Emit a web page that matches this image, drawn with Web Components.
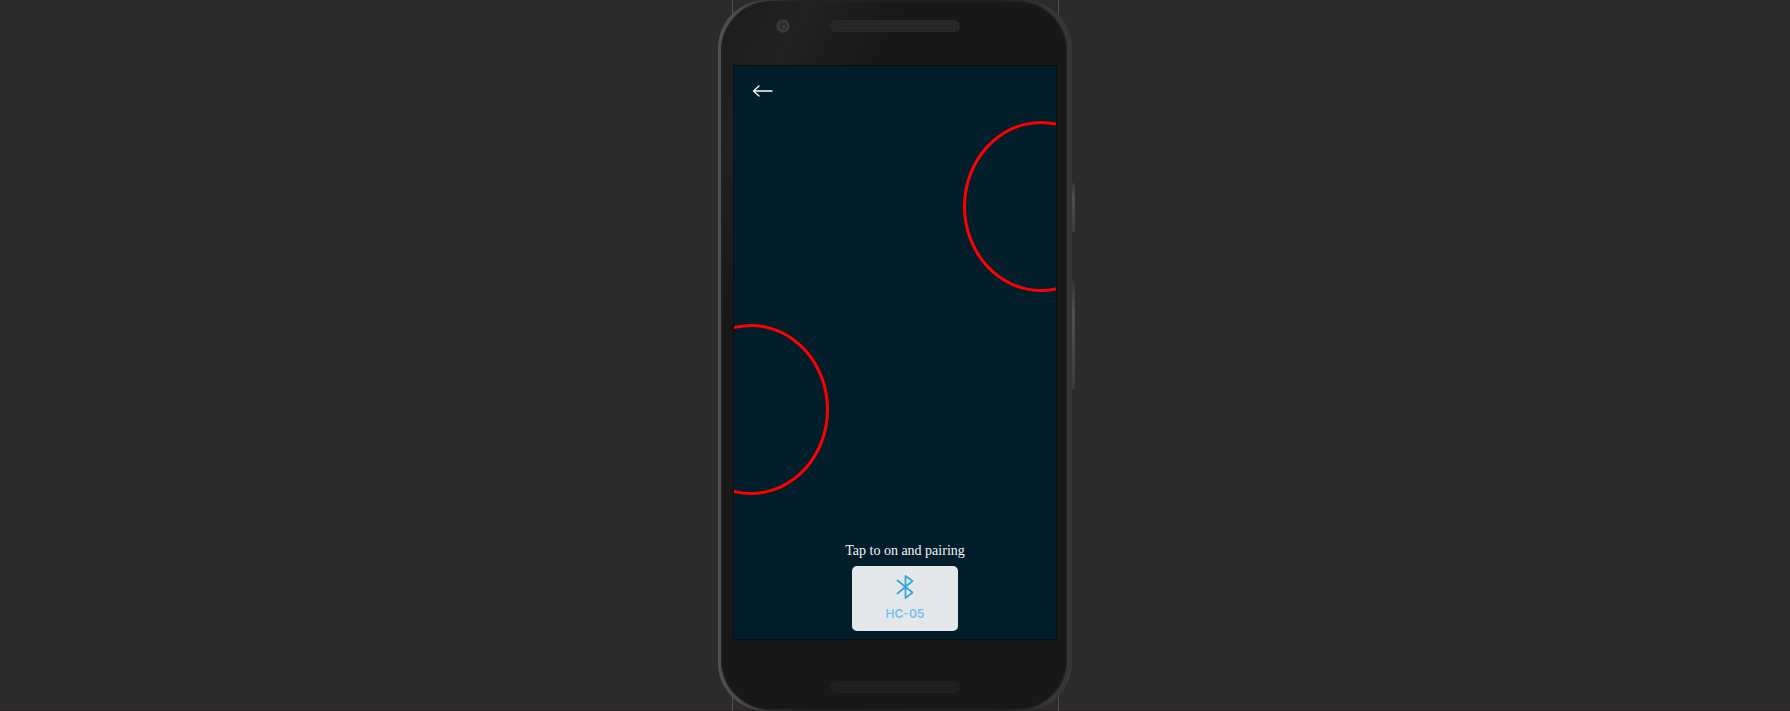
<!DOCTYPE html>
<html lang="en">
<head>
<meta charset="utf-8">
<meta name="viewport" content="width=device-width">
<title>Bluetooth pairing</title>
<style>
html, body { height: 100%; }
body { margin: 0; background: #2b2b2b; overflow: hidden; }
</style>
</head>
<body>
<phone-preview>
  <pairing-screen>
    <back-button slot="top"></back-button>
    <device-card>HC-05</device-card>
  </pairing-screen>
</phone-preview>
<script>
class ShadowElement extends HTMLElement {
  constructor() {
    super();
    this.attachShadow({ mode: "open" }).innerHTML = this.constructor.markup;
  }
}

class PhonePreview extends ShadowElement {
  static markup = `<style>
    :host { display: flex; justify-content: center; height: 100vh; min-height: 640px; box-shadow: inset 0 -1px #241f22; overflow: hidden; }
    .stage { position: relative; display: flex; }
    .guide { position: absolute; top: 0; bottom: 0; width: 1px; background: #505050; }
    .guide.l { left: 14px; } .guide.r { right: 13px; }
    .phone { position: relative; box-sizing: border-box; width: 354px; display: flex; border-radius: 48px; padding: 1px 5px 1px 3px; background: linear-gradient(90deg, #50504e, #4a4a48 20px, #222 80px, #1c1c1c 270px, #363632 330px, #363632); }
    .body { box-sizing: border-box; width: 100%; display: grid; grid-template-rows: 64px 1fr 70px; border-radius: 50px; padding: 0 0 0 2px; background: linear-gradient(120deg, #1c1c1c, #212121 80px, #181818 160px); box-shadow: inset 0 0 2px 1px #242422; }
    .bar { display: grid; grid-template-columns: 1fr 130px 1fr; align-items: center; }
    .grille { grid-column: 2; height: 12px; border-radius: 6px; background: radial-gradient(circle, #242424 1px, transparent 1px) 0 0 / 4px 4px #282828; }
    .top { padding-bottom: 14px; }
    .bottom { padding-top: 24px; }
    .bottom .grille { background: radial-gradient(circle, #1d1d1d 1px, transparent 1px) 0 0 / 4px 4px #202020; }
    .camera { width: 14px; height: 14px; justify-self: end; margin-right: 40px; }
    .display { margin: 0 10px; border: 1px solid #0e0e0e; overflow: hidden; min-height: 0; }
    .key { position: absolute; right: -3px; width: 3px; background: linear-gradient(#353335, #524f52 30%, #3c3a3c); }
    .power { top: 183px; height: 49px; } .volume { top: 281px; height: 108px; }
  </style>
  <div class="stage">
    <i class="guide l"></i><i class="guide r"></i>
    <div class="phone">
      <div class="body">
        <div class="bar top">
          <svg class="camera" viewBox="0 0 14 14"><circle cx="7" cy="7" r="5" fill="#292829" stroke="#383838" stroke-width="3.500"/><circle cx="7" cy="7" r="2.500" fill="#2f2b31"/><circle cx="8" cy="8" r="1" fill="#5c4c54"/></svg>
          <div class="grille"></div>
        </div>
        <div class="display"><slot></slot></div>
        <div class="bar bottom"><div class="grille"></div></div>
      </div>
      <i class="key power"></i><i class="key volume"></i>
    </div>
  </div>`;
}

class PairingScreen extends ShadowElement {
  static markup = `<style>
    :host { position: relative; display: flex; flex-direction: column; justify-content: space-between; height: 100%; box-sizing: border-box; padding: 15px 16px 8px; background: #021e2b; overflow: hidden; }
    .ring { position: absolute; box-sizing: border-box; width: 156px; height: 171px; border: 3px solid #f00; border-radius: 50%; }
    .one { right: -63px; top: 55px; } .two { left: -61px; top: 258px; }
    .pair { position: relative; display: flex; flex-direction: column; align-items: center; gap: 6px; padding-left: 20px; }
    p { margin: 0; font: 14px/18px "Source Serif Pro", "Liberation Serif", serif; color: #f4f4f4; }
  </style>
  <i class="ring one"></i><i class="ring two"></i>
  <slot name="top"></slot>
  <div class="pair"><p>Tap to on and pairing</p><slot></slot></div>`;
}

class BackButton extends ShadowElement {
  static markup = `<style>
    :host { display: flex; }
    button { display: grid; place-items: center; width: 24px; height: 20px; margin: 0; padding: 0; border: 0; background: none; color: #fff; cursor: pointer; }
  </style>
  <button type="button" aria-label="Back"><svg width="24" height="20" viewBox="0 0 24 20" fill="none" stroke="currentColor" stroke-width="1.300" stroke-linecap="round" stroke-linejoin="round"><path d="M22 10H3.500M9 5L3.500 10L9 15"/></svg></button>`;
}

class DeviceCard extends ShadowElement {
  static markup = `<style>
    :host { display: block; }
    button { display: flex; flex-direction: column; align-items: center; gap: 6px; box-sizing: border-box; width: 106px; height: 65px; margin: 0; padding: 8px 0; border: 0; border-radius: 5px; background: #e4e8eb; color: #75c1ee; font: 600 12px/16px Inter, "Liberation Sans", sans-serif; cursor: pointer; }
    svg { flex: none; }
  </style>
  <button type="button"><svg width="20" height="26" viewBox="0 0 20 26" fill="none" stroke="#38a5df" stroke-width="1.800" stroke-linejoin="round" stroke-linecap="round"><path d="M2.500 6.500L17.500 18.500L10.500 24V2L17.500 7L2.500 19.500"/></svg><span><slot></slot></span></button>`;
}

customElements.define("phone-preview", PhonePreview);
customElements.define("pairing-screen", PairingScreen);
customElements.define("back-button", BackButton);
customElements.define("device-card", DeviceCard);
</script>
</body>
</html>
